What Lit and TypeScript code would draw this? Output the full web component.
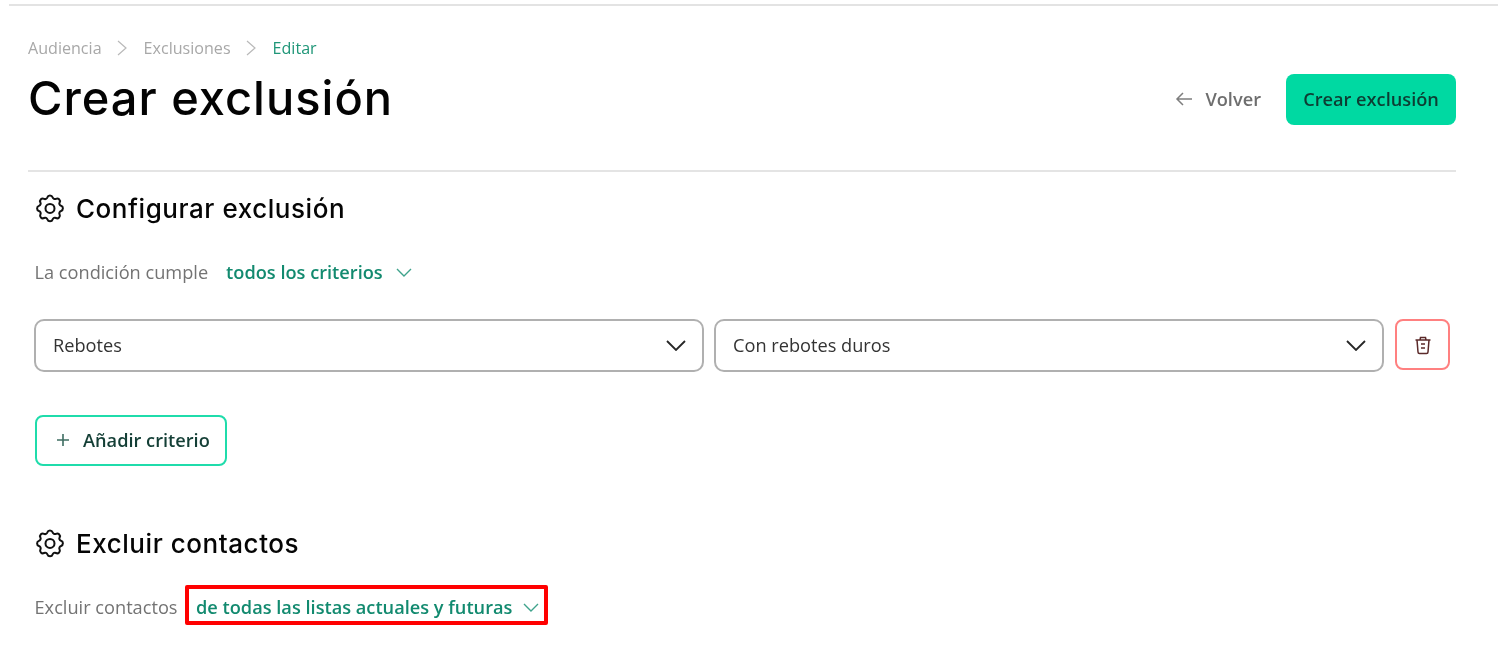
import { LitElement, html, css, svg } from "lit";
import { customElement } from "lit/decorators.js";

const gear = svg`<path d="M10.300 3.200c.4-1.600 2.900-1.600 3.400 0 .3 1 1.400 1.500 2.300 1 1.500-.8 3.200.9 2.400 2.400-.5.900 0 2 1 2.300 1.600.4 1.600 2.900 0 3.400-1 .3-1.500 1.400-1 2.300.8 1.500-.9 3.200-2.400 2.400-.9-.5-2 0-2.300 1-.4 1.600-2.900 1.600-3.400 0-.3-1-1.400-1.500-2.300-1-1.500.8-3.200-.9-2.400-2.400.5-.9 0-2-1-2.300-1.600-.4-1.600-2.900 0-3.400 1-.3 1.500-1.400 1-2.300-.8-1.500.9-3.200 2.400-2.400.9.500 2 0 2.300-1Z"/><circle cx="12" cy="10.600" r="3"/>`;

@customElement("app-root")
export class AppRoot extends LitElement {
  static styles = css`
    :host { display: block; width: 1498px; height: 658px; overflow: hidden; background: #fff; font-family: "Open Sans", "Noto Sans", sans-serif; }
    .page { display: flex; flex-direction: column; padding: 4px 42px 0 28px; filter: blur(0.3px); }
    .topline { height: 2px; background: #e3e3e3; margin-left: -19px; margin-right: -42px; }
    .head { display: flex; justify-content: space-between; align-items: flex-start; height: 166px; border-bottom: 2px solid #e4e4e4; box-sizing: border-box; }
    .crumbs { display: flex; align-items: center; margin-top: 32px; height: 20px; font-size: 16.100px; font-weight: 500; color: #a8a8a8; }
    .crumbs svg { width: 12px; height: 16px; margin: 0 16px 0 14px; fill: none; stroke: #b9b9b9; stroke-width: 1.200; }
    .crumbs .now { color: #1f9678; font-weight: 500; }
    h1 { margin: 13px 0 0; font: 500 47px/54px "Inter", sans-serif; color: #030303; letter-spacing: 1px; }
    .actions { display: flex; align-items: center; gap: 25px; margin-top: 68px; }
    .back { display: flex; align-items: center; gap: 12px; padding-bottom: 2px; font-size: 18.200px; font-weight: 600; color: #6e6e6e; }
    .back svg { width: 18px; height: 14px; fill: none; stroke: #7e7e7e; stroke-width: 1.500; }
    .primary { width: 170px; height: 51px; box-sizing: border-box; padding-bottom: 2px; display: flex; align-items: center; justify-content: center; background: #00d9a2; border-radius: 8px; font-size: 18.200px; font-weight: 600; color: #0d3d33; }
    h2 { display: flex; align-items: center; gap: 8px; margin: 0 0 0 4px; height: 36px; font: 500 26px/36px "Inter", sans-serif; color: #050505; letter-spacing: 0.55px; }
    h2 svg { width: 36px; height: 36px; flex: none; fill: none; stroke: #111; stroke-width: 1.350; stroke-linejoin: round; }
    .s1 { margin-top: 19px; }
    .s2 { margin-top: 60px; }
    .cond { display: flex; align-items: center; height: 30px; margin-left: 6.500px; margin-top: 30px; font-size: 18.200px; color: #737373; }
    .s2 .cond { margin-top: 30px; }
    .val { display: flex; align-items: center; font-weight: 600; color: #128a6f; }
    .val svg { width: 16px; height: 9px; fill: none; stroke: #3fa38c; stroke-width: 1.400; }
    .c1 { margin-left: 18px; gap: 13px; }
    .c2 { margin: 0 0 4px 7.500px; gap: 11px; border: 4px solid #f00; height: 40px; width: 363px; box-sizing: border-box; padding: 4px 0 0 7px; border-radius: 2px; }
    .row { display: flex; gap: 10px; margin: 32px 0 0 6px; }
    .sel { flex: none; width: 670px; height: 53px; box-sizing: border-box; display: flex; align-items: center; justify-content: space-between; padding: 0 16px 1px 17px; border: 2px solid #b0b0b0; border-radius: 10px; font-size: 18.200px; color: #333; }
    .sel svg { width: 20px; height: 11px; fill: none; stroke: #262626; stroke-width: 1.800; }
    .del { flex: none; margin-left: 1px; width: 55px; height: 51px; box-sizing: border-box; border: 2px solid #ff8080; border-radius: 8px; display: flex; align-items: center; justify-content: center; }
    .del svg { width: 20px; height: 20px; fill: none; stroke: #5b2a2a; stroke-width: 1.500; }
    .add { margin: 43px 0 0 7px; width: 192px; height: 51px; box-sizing: border-box; display: flex; align-items: center; gap: 13px; padding: 0 0 2px 19px; border: 2px solid #1fdcab; border-radius: 8px; font-size: 18.200px; font-weight: 600; color: #143f36; }
    .add svg { width: 14px; height: 14px; fill: none; stroke: #3e6d62; stroke-width: 1.600; }
  `;

  private chev() {
    return html`<svg viewBox="0 0 16 9"><path d="M1 1l7 7 7-7"/></svg>`;
  }
  private sep() {
    return html`<svg viewBox="0 0 12 16"><path d="M2 1l8 7-8 7"/></svg>`;
  }

  render() {
    return html`
      <div class="page">
        <div class="topline"></div>
        <header class="head">
          <div>
            <nav class="crumbs"><span>Audiencia</span>${this.sep()}<span>Exclusiones</span>${this.sep()}<span class="now">Editar</span></nav>
            <h1>Crear exclusión</h1>
          </div>
          <div class="actions">
            <div class="back"><svg viewBox="0 0 18 14"><path d="M17 7H2M8 1L2 7l6 6"/></svg>Volver</div>
            <div class="primary">Crear exclusión</div>
          </div>
        </header>

        <section class="s1">
          <h2><svg viewBox="0 0 24 22">${gear}</svg>Configurar exclusión</h2>
          <div class="cond">La condición cumple<span class="val c1">todos los criterios ${this.chev()}</span></div>
          <div class="row">
            <div class="sel">Rebotes<svg viewBox="0 0 20 11"><path d="M1 1l9 9 9-9"/></svg></div>
            <div class="sel">Con rebotes duros<svg viewBox="0 0 20 11"><path d="M1 1l9 9 9-9"/></svg></div>
            <div class="del"><svg viewBox="0 0 20 20"><path d="M2.500 5h15M7 5l.5-2.500h5L13 5M4 5l1 12a1.500 1.500 0 0 0 1.500 1.500h7A1.500 1.500 0 0 0 15 17l1-12M8 9h4M8 13h4"/></svg></div>
          </div>
          <div class="add"><svg viewBox="0 0 14 14"><path d="M7 1v12M1 7h12"/></svg>Añadir criterio</div>
        </section>

        <section class="s2">
          <h2><svg viewBox="0 0 24 22">${gear}</svg>Excluir contactos</h2>
          <div class="cond">Excluir contactos<span class="val c2">de todas las listas actuales y futuras ${this.chev()}</span></div>
        </section>
      </div>
    `;
  }
}
